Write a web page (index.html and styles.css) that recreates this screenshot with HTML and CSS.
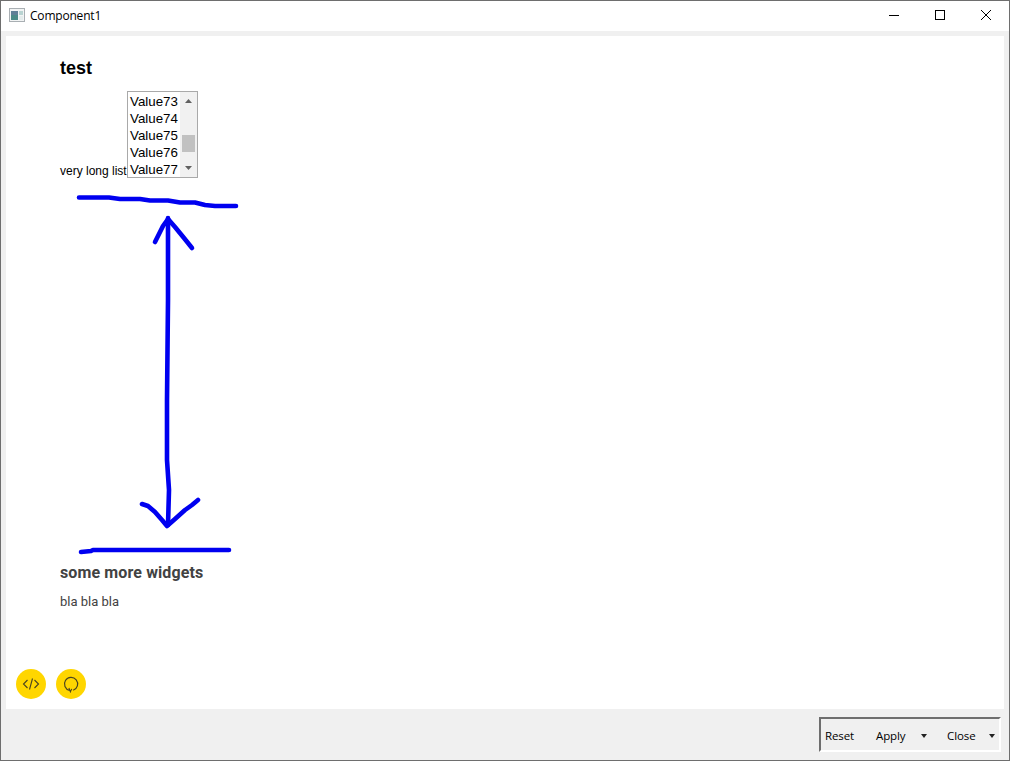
FILE: index.html
```html
<!DOCTYPE html>
<html lang="en">
<head>
<meta charset="utf-8">
<title>Component1</title>
<link rel="stylesheet" href="styles.css">
</head>
<body>
<div class="window">
  <header class="titlebar">
    <svg class="app-icon" width="16" height="14" viewBox="0 0 16 14"><rect x="0.5" y="0.5" width="15" height="13" fill="#f2f4f4" stroke="#a9afb3"/><rect x="2" y="3" width="7" height="9" fill="#4a8a86"/><rect x="2" y="3" width="7" height="4" fill="#5f7f96"/><rect x="10" y="3" width="4" height="4" fill="#b9d4d2"/><rect x="10" y="8" width="4" height="4" fill="#e4ecec"/></svg>
    <span class="title">Component1</span>
    <div class="controls">
      <span class="control"><svg width="10" height="10" viewBox="0 0 10 10"><path d="M0 5.5H10" stroke="#000"/></svg></span>
      <span class="control"><svg width="10" height="10" viewBox="0 0 10 10"><rect x="0.5" y="0.5" width="9" height="9" fill="none" stroke="#000"/></svg></span>
      <span class="control"><svg width="10" height="10" viewBox="0 0 10 10"><path d="M0 0L10 10M10 0L0 10" stroke="#000" stroke-width="1"/></svg></span>
    </div>
  </header>
  <main class="content">
    <h1 class="heading">test</h1>
    <div class="field">
      <label class="field-label">very long list</label>
      <div class="listbox">
        <ul class="options">
          <li>Value73</li>
          <li>Value74</li>
          <li>Value75</li>
          <li>Value76</li>
          <li>Value77</li>
        </ul>
        <div class="scrollbar">
          <svg class="arrow-up" width="7" height="4" viewBox="0 0 7 4"><path d="M3.500 0L7 4H0Z" fill="#606060"/></svg>
          <span class="thumb"></span>
          <svg class="arrow-down" width="7" height="4" viewBox="0 0 7 4"><path d="M0 0H7L3.500 4Z" fill="#606060"/></svg>
        </div>
      </div>
    </div>
    <div class="spacer"></div>
    <h2 class="subheading">some more widgets</h2>
    <p class="body-text">bla bla bla</p>
    <div class="fabs">
      <button class="fab" type="button"><svg width="18" height="18" viewBox="0 0 18 18" fill="none" stroke="#4a4420" stroke-width="1.1"><path d="M5.500 5L1.500 9L5.500 13M12.500 5L16.500 9L12.500 13M10.500 3.500L7.500 14.500"/></svg></button>
      <button class="fab" type="button"><svg width="18" height="18" viewBox="0 0 18 18" fill="none" stroke="#4a4420" stroke-width="1.2"><path d="M7.600 15.400A6.600 6.600 0 1 1 11.200 15.200"/><path d="M6.900 13L8.400 16.800L9.700 13.900" stroke-width="1.100"/></svg></button>
    </div>
    <svg class="ink" width="998" height="673" viewBox="6 36 998 673" fill="none" stroke="#0000f0" stroke-width="4.600" stroke-linecap="round" stroke-linejoin="round">
      <path d="M79 197.500H109L120 199H140L150 200.500H168L180 202.500H195L205 205L215 206H236"/>
      <path d="M168 218L168 300L167 400L167 460L169 490L168 525"/>
      <path d="M155 242L158 236L163 226L168 219L175 227L184 238L192 248"/>
      <path d="M142 504L148 506L155 512L162 520L167 526L175 519L185 510L192 505L198 500"/>
      <path d="M81 552L91 551L93 550H229"/>
    </svg>
  </main>
  <footer class="footer">
    <div class="actions">
      <span class="action action-reset">Reset</span>
      <span class="action action-apply">Apply<i class="caret"></i></span>
      <span class="action action-close">Close<i class="caret"></i></span>
    </div>
  </footer>
</div>
</body>
</html>
```

FILE: styles.css
```css
* { box-sizing: border-box; }
html, body { margin: 0; height: 100%; overflow: hidden; }
body { font-family: "Liberation Sans", Arial, sans-serif; }

.window {
  width: 1010px;
  height: 761px;
  display: flex;
  flex-direction: column;
  background: #f0f0f0;
  border: 1px solid #6e6e6e;
}

.titlebar {
  height: 30px;
  flex: none;
  display: flex;
  align-items: center;
  background: #fff;
  padding-left: 8px;
}
.app-icon { flex: none; margin-top: -2px; }
.title {
  margin-left: 5px;
  font: 12px "Open Sans", "Noto Sans", sans-serif;
  letter-spacing: -0.2px;
  color: #000;
  margin-top: -1px;
}
.controls { margin-left: auto; display: flex; }
.control {
  width: 46px;
  height: 30px;
  display: flex;
  align-items: center;
  justify-content: center;
  padding-bottom: 2px;
}

.content {
  position: relative;
  margin: 5px 5px 0;
  height: 673px;
  flex: none;
  background: #fff;
  display: flex;
  flex-direction: column;
  padding: 22px 0 0 54px;
}
.heading {
  margin: 0;
  font-size: 18px;
  line-height: 21px;
  font-weight: bold;
  color: #000;
}

.field {
  margin-top: 12px;
  display: flex;
  align-items: flex-end;
}
.field-label {
  width: 67px;
  font-size: 12px;
  line-height: 14px;
  color: #000;
  margin-bottom: 0;
}
.listbox {
  width: 71px;
  height: 87px;
  display: flex;
  border: 1px solid #a9a9a9;
  background: #fff;
}
.options {
  list-style: none;
  margin: 0;
  padding: 1px 0 0 2px;
  width: 52px;
  font-size: 13.33px;
  line-height: 17px;
  color: #000;
}
.scrollbar {
  position: relative;
  flex: none;
  width: 17px;
  background: #f1f1f1;
}
.arrow-up { position: absolute; left: 5px; top: 7px; }
.arrow-down { position: absolute; left: 5px; top: 74px; }
.thumb {
  position: absolute;
  left: 2px;
  top: 43px;
  width: 13px;
  height: 17px;
  background: #c1c1c1;
}

.spacer { height: 385px; flex: none; }

.subheading {
  margin: 0;
  font: bold 16px/19px Roboto, sans-serif;
  letter-spacing: 0.12px;
  color: #424242;
}
.body-text {
  margin: 13px 0 0;
  font: 13px/14px Roboto, sans-serif;
  color: #424242;
}

.fabs {
  position: absolute;
  left: 10px;
  top: 633px;
  display: flex;
  gap: 10px;
}
.fab {
  width: 30px;
  height: 30px;
  padding: 0;
  border: 0;
  border-radius: 50%;
  background: #ffd600;
  display: flex;
  align-items: center;
  justify-content: center;
}

.ink { position: absolute; left: 0; top: 0; pointer-events: none; }

.footer {
  flex: 1;
  display: flex;
  justify-content: flex-end;
  padding: 8px 8px 0 0;
}
.actions {
  width: 182px;
  height: 35px;
  display: flex;
  align-items: center;
  border: 2px solid;
  border-color: #6e6e6e #fff #fff #6e6e6e;
  font: 11.5px "Open Sans", "Noto Sans", sans-serif;
  letter-spacing: -0.1px;
  color: #000;
  position: relative;
  padding-top: 2px;
}
.action { display: flex; align-items: center; }
.action-reset { margin-left: 4px; width: 51px; }
.action-apply { width: 71px; }
.action-close { flex: 1; }
.caret {
  width: 0;
  height: 0;
  border-style: solid;
  border-width: 4px 3.5px 0;
  border-color: #222 transparent transparent;
  margin-left: auto;
}
.action-apply .caret { margin-right: 20px; }
.action-close .caret { margin-right: 4px; }
```
